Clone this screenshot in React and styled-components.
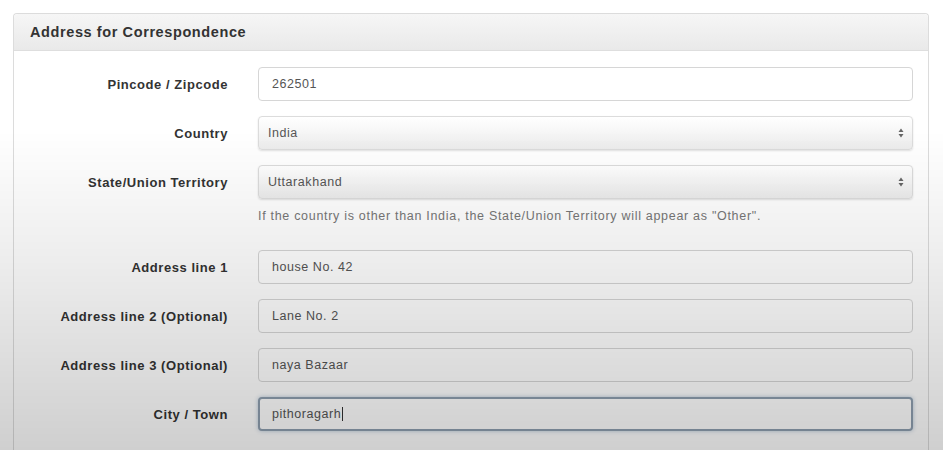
import React from "react";
import styled, { createGlobalStyle, css } from "styled-components";

const GlobalStyle = createGlobalStyle`
  html, body {
    margin: 0;
    padding: 0;
    background: #fff;
    font-family: "Liberation Sans", Arial, sans-serif;
    color: #333;
  }
  body::after {
    content: "";
    position: fixed;
    inset: 0;
    pointer-events: none;
    background: linear-gradient(to bottom, rgba(0,0,0,0) 0px, rgba(0,0,0,0) 130px, rgba(0,0,0,0.07) 260px, rgba(0,0,0,0.19) 450px);
  }
`;

const Page = styled.div`
  padding: 13px 14px 0 13px;
`;

const Panel = styled.section`
  border: 1px solid #dcdcdc;
  border-bottom: none;
  border-radius: 4px 4px 0 0;
  background: #fff;
`;

const PanelHeader = styled.header`
  height: 36px;
  display: flex;
  align-items: center;
  padding: 0 16px;
  background: linear-gradient(to bottom, #f6f6f6, #e9e9e9);
  border-bottom: 1px solid #dedede;
  border-radius: 4px 4px 0 0;
  font-size: 14.5px;
  letter-spacing: 0.6px;
  font-weight: bold;
  color: #333;
`;

const PanelBody = styled.div`
  padding: 16px 15px 20px 15px;
  display: flex;
  flex-direction: column;
`;

const Row = styled.div`
  display: grid;
  grid-template-columns: 199px 1fr;
  column-gap: 30px;
  align-items: center;
  margin-bottom: ${(p) => p.$gap ?? 15}px;
`;

const Label = styled.label`
  text-align: right;
  font-size: 13px;
  letter-spacing: 0.55px;
  font-weight: bold;
  color: #333;
`;

const Field = styled.div`
  position: relative;
  height: 34px;
  box-sizing: border-box;
  display: flex;
  align-items: center;
  padding: 0 13px;
  border: 1px solid #d6d6d6;
  border-radius: 4px;
  background: #fff;
  font-size: 12.5px;
  letter-spacing: 0.55px;
  color: #555;
  ${(p) =>
    p.$select &&
    css`
      padding-left: 9px;
      background: linear-gradient(to bottom, #ffffff, #ececec);
      box-shadow: 0 1px 2px rgba(0, 0, 0, 0.12);
      border-color: #dcdcdc;
    `}
  ${(p) =>
    p.$focus &&
    css`
      border: 2px solid #8f9fb0;
      box-shadow: 0 0 4px rgba(90, 130, 170, 0.45);
      padding-left: 12px;
    `}
`;

const Arrows = styled.svg`
  position: absolute;
  right: 8px;
  top: 50%;
  transform: translateY(-50%);
`;

const Caret = styled.span`
  display: inline-block;
  width: 1px;
  height: 14px;
  background: #333;
  margin-left: 1px;
`;

const Help = styled.p`
  grid-column: 2;
  margin: 10px 0 0 0;
  font-size: 12.5px;
  letter-spacing: 0.7px;
  color: #777;
`;

function SelectArrows() {
  return (
    <Arrows width="6" height="10" viewBox="0 0 6 10">
      <path d="M3 0.5 L5.5 4 H0.5 Z" fill="#666" />
      <path d="M3 9.5 L5.5 6 H0.5 Z" fill="#666" />
    </Arrows>
  );
}

const rows = [
  { label: "Pincode / Zipcode", value: "262501" },
  { label: "Country", value: "India", select: true },
  {
    label: "State/Union Territory",
    value: "Uttarakhand",
    select: true,
    help: 'If the country is other than India, the State/Union Territory will appear as "Other".',
    gap: 27,
  },
  { label: "Address line 1", value: "house No. 42" },
  { label: "Address line 2 (Optional)", value: "Lane No. 2" },
  { label: "Address line 3 (Optional)", value: "naya Bazaar" },
  { label: "City / Town", value: "pithoragarh", focus: true },
];

export default function App() {
  return (
    <>
      <GlobalStyle />
      <Page>
        <Panel>
          <PanelHeader>Address for Correspondence</PanelHeader>
          <PanelBody>
            {rows.map((r) => (
              <Row key={r.label} $gap={r.gap}>
                <Label>{r.label}</Label>
                <Field $select={r.select} $focus={r.focus}>
                  {r.value}
                  {r.focus && <Caret />}
                  {r.select && <SelectArrows />}
                </Field>
                {r.help && <Help>{r.help}</Help>}
              </Row>
            ))}
          </PanelBody>
        </Panel>
      </Page>
    </>
  );
}
